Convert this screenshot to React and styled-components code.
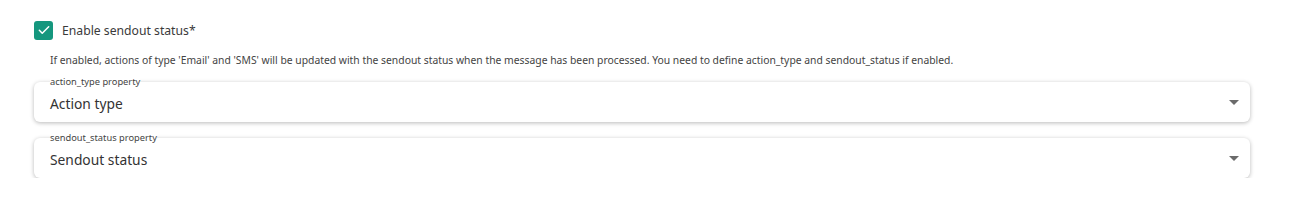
import React from 'react';
import styled, { createGlobalStyle } from 'styled-components';

const GlobalStyle = createGlobalStyle`
    body {
        margin: 0;
        background: #ffffff;
        font-family: "Segoe UI", "Noto Sans", "Open Sans", sans-serif;
        color: #333;
    }
`;

const Page = styled.div`
    padding: 20px 64px 0 34px;
    display: flex;
    flex-direction: column;
`;

const CheckRow = styled.label`
    display: flex;
    align-items: center;
    gap: 9px;
    height: 20px;
    font-size: 12.2px;
    color: #3a3a3a;
`;

const Box = styled.span`
    width: 19px;
    height: 19px;
    border-radius: 3px;
    background: ${(p) => (p.$checked ? '#15977e' : '#fff')};
    display: flex;
    align-items: center;
    justify-content: center;
`;

const Helper = styled.p`
    margin: 13px 0 0 16px;
    font-size: 10.35px;
    color: #444;
    line-height: 14px;
`;

const Field = styled.div`
    position: relative;
    margin-top: ${(p) => p.$top}px;
    height: 40px;
    background: #fff;
    border-radius: 6px;
    box-shadow: 0 1px 4px rgba(0, 0, 0, 0.28);
    display: flex;
    align-items: center;
    padding: 0 11px 0 16px;
`;

const FieldLabel = styled.span`
    position: absolute;
    left: 16px;
    top: -6px;
    font-size: 9.3px;
    color: #444;
    background: #fff;
    line-height: 12px;
`;

const Value = styled.span`
    flex: 1;
    font-size: 13.8px;
    color: #333;
    padding-top: 2px;
`;

const Caret = styled.span`
    width: 0;
    height: 0;
    border-left: 5px solid transparent;
    border-right: 5px solid transparent;
    border-top: 5px solid #6b6b6b;
`;

function Select({ label, value, top }) {
    return (
        <Field $top={top}>
            <FieldLabel>{label}</FieldLabel>
            <Value>{value}</Value>
            <Caret />
        </Field>
    );
}

export default function App() {
    return (
        <>
            <GlobalStyle />
            <Page>
                <CheckRow>
                    <Box $checked>
                        <svg width="14" height="14" viewBox="0 0 24 24" fill="none" stroke="#fff" strokeWidth="2.6" strokeLinecap="round" strokeLinejoin="round">
                            <path d="M4 12.5l5 5L20 6.5" />
                        </svg>
                    </Box>
                    Enable sendout status*
                </CheckRow>
                <Helper>
                    If enabled, actions of type 'Email' and 'SMS' will be updated with the sendout status when the message has been processed. You need to define action_type and sendout_status if enabled.
                </Helper>
                <Select top={15} label="action_type property" value="Action type" />
                <Select top={16} label="sendout_status property" value="Sendout status" />
            </Page>
        </>
    );
}
